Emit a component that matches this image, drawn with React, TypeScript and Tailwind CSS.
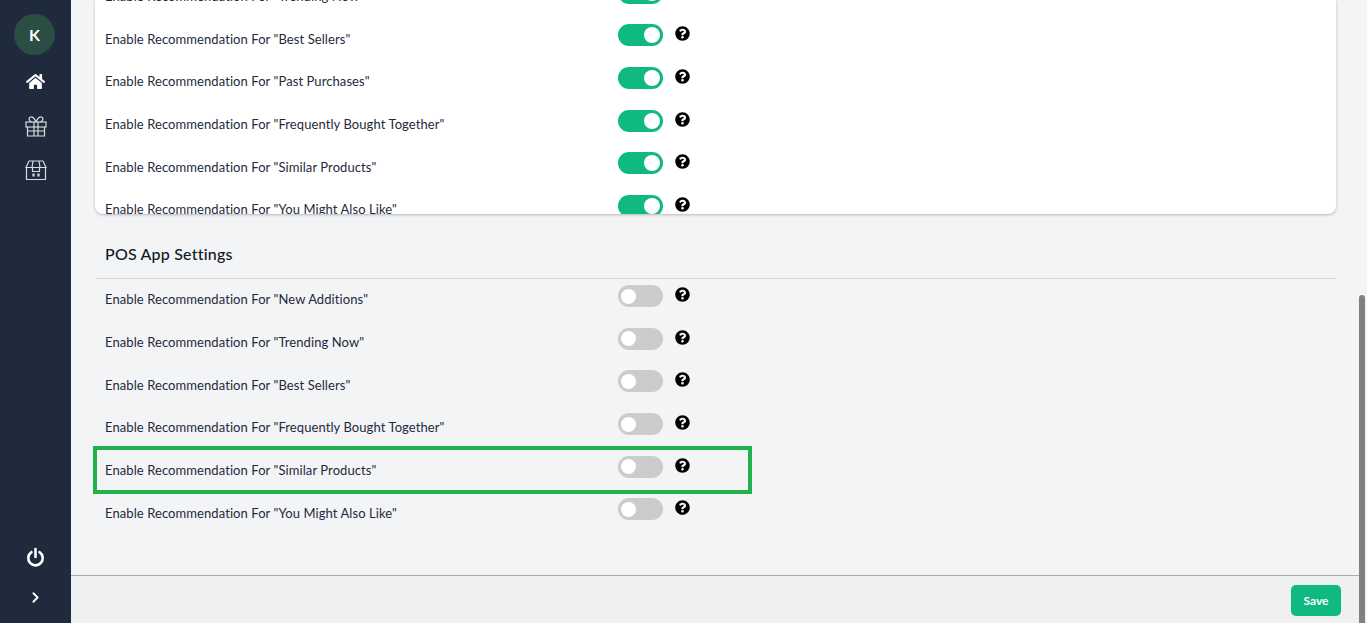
import React from "react";
import { FaHome, FaQuestionCircle } from "react-icons/fa";
import { FiChevronRight } from "react-icons/fi";

const webLabels = ["Trending Now", "Best Sellers", "Past Purchases", "Frequently Bought Together", "Similar Products", "You Might Also Like"];
const posLabels = ["New Additions", "Trending Now", "Best Sellers", "Frequently Bought Together", "Similar Products", "You Might Also Like"];

const Toggle = ({ on }: { on: boolean }) => (
  <div className={`mb-[4px] flex h-[22px] w-[45px] items-center rounded-full px-[3px] ${on ? "justify-end bg-[#10b981]" : "justify-start bg-[#cccccc]"}`}>
    <div className={`rounded-full bg-white ${on ? "h-[16px] w-[16px]" : "h-[15px] w-[15px]"}`} />
  </div>
);

const SettingRow = ({ label, on }: { label: string; on: boolean }) => (
  <div className="flex h-[42.67px] items-center pl-[10px]">
    <span className="mt-[4px] w-[513px] text-[13px] tracking-[0.08px] text-[#1f2a3c]">Enable Recommendation For "{label}"</span>
    <Toggle on={on} />
    <FaQuestionCircle className="mb-[7px] ml-[12px] text-[15px] text-black" />
  </div>
);

const GiftIcon = () => (
  <svg width="22" height="21" viewBox="0 0 22 21" fill="none" stroke="#d8dbe0" strokeWidth="1.2">
    <rect x="1" y="6" width="20" height="5" />
    <path d="M2.5 11v9h17v-9" />
    <path d="M9 6v14M13 6v14M2.5 15h17" />
    <path d="M11 6C9 1.5 6.5.6 5 1.2 3.4 2 4 5 6.5 6M11 6c2-4.5 4.5-5.4 6-4.8 1.6.8 1 3.8-1.5 4.8" />
  </svg>
);

const StoreIcon = () => (
  <svg width="22" height="20" viewBox="0 0 22 20" fill="none" stroke="#d8dbe0" strokeWidth="1.2">
    <path d="M1.5 7.5v12h19v-12" />
    <path d="M1 7.5 4 1h14l3 6.5z" />
    <path d="M8 1 7 7.5M14 1l1 6.5M7.5 7.5v4h7v-4" />
    <path d="M8 14h1v2H8zM13 14h1v2h-1z" fill="#d8dbe0" />
  </svg>
);

const Sidebar = () => (
  <aside className="flex h-[623px] w-[71px] shrink-0 flex-col items-center bg-[#1f2a3c] pt-[14px] text-white">
    <div className="mr-[2px] flex h-[41px] w-[41px] items-center justify-center rounded-full bg-[#2a4d44] text-[16px] font-bold">K</div>
    <FaHome className="mt-[17px] text-[19px]" />
    <div className="mt-[25px]"><GiftIcon /></div>
    <div className="mt-[23px]"><StoreIcon /></div>
    <svg className="mt-auto" width="19" height="20" viewBox="0 0 19 20" fill="none" stroke="white" strokeWidth="2.6" strokeLinecap="round">
      <path d="M5.5 5.2a7.2 7.2 0 1 0 8 0" />
      <path d="M9.5 2v8" />
    </svg>
    <FiChevronRight className="mb-[17px] mt-[22px] text-[17px]" strokeWidth={2.5} />
  </aside>
);

export default function App() {
  return (
    <div className="flex h-[623px] w-full overflow-hidden bg-[#f3f4f6] font-['Lato',sans-serif]">
      <Sidebar />
      <main className="flex min-w-0 flex-1 flex-col">
        <div className="h-[575px] overflow-hidden pl-[24px] pr-[24px]">
          <div className="h-[214px] w-[1241px] overflow-hidden rounded-b-lg bg-white shadow-[0_1px_3px_rgba(0,0,0,0.25)]">
            <div className="-mt-[26.7px]">
              {webLabels.map((label) => (
                <SettingRow key={label} label={label} on />
              ))}
            </div>
          </div>
          <h2 className="mt-[30px] pl-[10px] text-[16px] font-medium leading-[20px] tracking-[0.2px] text-[#111827]">POS App Settings</h2>
          <div className="mt-[14px] w-[1241px] border-t border-[#d9dadc]">
            <div className="-mt-[2.3px]">
              {posLabels.map((label, i) => (
                <div key={label} className="relative">
                  <SettingRow label={label} on={false} />
                  {i === 4 && <div className="absolute -left-[2px] -top-px h-[48px] w-[659px] border-4 border-[#22b14c]" />}
                </div>
              ))}
            </div>
          </div>
        </div>
        <footer className="flex h-[48px] items-center justify-end border-t border-[#aaaaaa] bg-[#eff0f2] pr-[18px]">
          <button type="button" className="mt-[2px] h-[31px] w-[50px] rounded-[5px] bg-[#10b981] text-[12px] font-bold text-white">Save</button>
        </footer>
      </main>
      <div className="flex w-[8px] shrink-0 flex-col bg-[#f3f4f6]">
        <div className="mt-[295px] h-[328px] w-[6px] rounded-t-[3px] bg-[#808080]" />
      </div>
    </div>
  );
}
